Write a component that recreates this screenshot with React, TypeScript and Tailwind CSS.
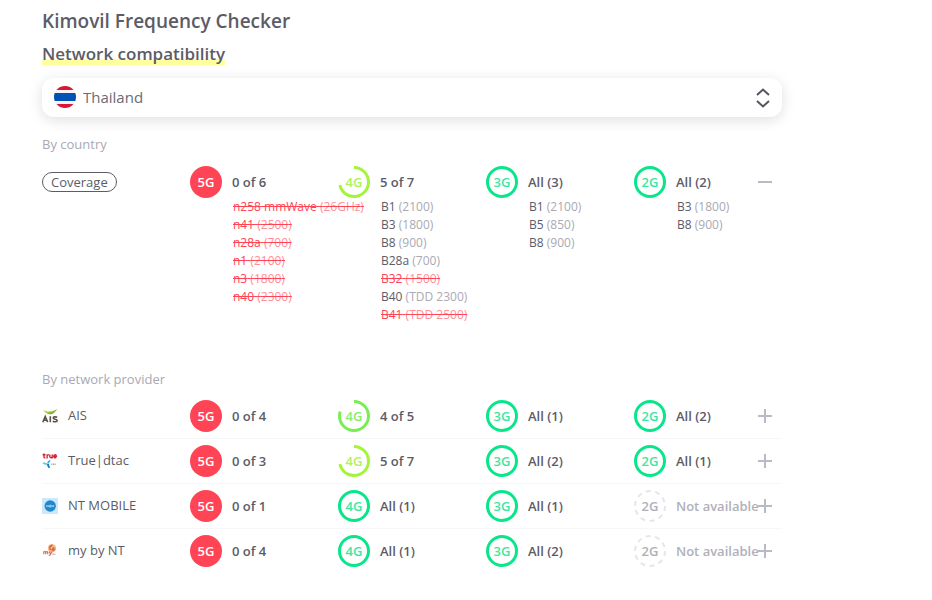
import { useState } from "react";
import clsx from "clsx";

interface Band {
  name: string;
  freq: string;
  missing?: boolean;
}

interface Coverage {
  supported: number;
  total: number;
  bands?: Band[];
}

interface Provider {
  name: string;
  logo: React.ReactNode;
  coverage: Coverage[];
}

const GENERATIONS = ["5G", "4G", "3G", "2G"];

const countryCoverage: Coverage[] = [
  {
    supported: 0,
    total: 6,
    bands: [
      { name: "n258 mmWave", freq: "26GHz", missing: true },
      { name: "n41", freq: "2500", missing: true },
      { name: "n28a", freq: "700", missing: true },
      { name: "n1", freq: "2100", missing: true },
      { name: "n3", freq: "1800", missing: true },
      { name: "n40", freq: "2300", missing: true },
    ],
  },
  {
    supported: 5,
    total: 7,
    bands: [
      { name: "B1", freq: "2100" },
      { name: "B3", freq: "1800" },
      { name: "B8", freq: "900" },
      { name: "B28a", freq: "700" },
      { name: "B32", freq: "1500", missing: true },
      { name: "B40", freq: "TDD 2300" },
      { name: "B41", freq: "TDD 2500", missing: true },
    ],
  },
  {
    supported: 3,
    total: 3,
    bands: [
      { name: "B1", freq: "2100" },
      { name: "B5", freq: "850" },
      { name: "B8", freq: "900" },
    ],
  },
  {
    supported: 2,
    total: 2,
    bands: [
      { name: "B3", freq: "1800" },
      { name: "B8", freq: "900" },
    ],
  },
];

function AisLogo() {
  return (
    <svg className="size-4 shrink-0" viewBox="0 0 16 16" aria-hidden="true">
      <path d="M1 1.5C3 3 5 3.6 7 3.6C10 3.4 12.5 2.6 15 1C13.5 4 11 6.3 8.2 6.3C5 6.3 2.8 4.3 1 1.5Z" fill="#b5d334" />
      <path d="M5.5 4.5C9 5 12 3.5 15 1C13.5 4 11 6.3 8.2 6.3C7 6.3 6 5.6 5.5 4.5Z" fill="#7cb342" />
      <path
        d="M0.8 14.2L3.2 8.6L5.7 14.2M1.7 12.3H4.8M8.3 8.2V14.2M15.2 9.3C13.5 8.6 11.2 8.7 11.2 10C11.2 11.6 15.2 10.9 15.2 12.6C15.2 14.1 12.5 14 10.7 13.2"
        fill="none"
        stroke="#5b524c"
        strokeWidth="1.6"
      />
    </svg>
  );
}

function TrueDtacLogo() {
  return (
    <svg className="size-4 shrink-0" viewBox="0 0 16 16" aria-hidden="true">
      <path
        d="M2 0.5V4Q2 5 3.4 4.8M0.6 1.8H3.6M5.1 5.4V1.6M5 2.8Q5.5 1.7 6.8 1.8M7.8 1.6V3.8Q8.3 5 9.9 4.6M10.2 1.6V5.4M11.7 3.4H14.4Q14.2 1.7 13 1.8Q11.7 1.9 11.7 3.4Q11.8 5 14.4 4.6"
        fill="none"
        stroke="#d0263c"
        strokeWidth="1.4"
      />
      <path d="M8 7Q5.8 7.6 5.2 9.8L5.8 10.8L8.600 8Z" fill="#2ca9df" />
      <path d="M0.6 9.6Q3 9.2 5.4 10.4L5.2 12Q2.4 11.800 0.6 10.6Z" fill="#63c5ea" />
      <path d="M5 11.2L6.8 10.600Q7 12.800 8.200 14.600L6.8 15.300Q5 13.600 5 11.2Z" fill="#1777b5" />
      <path d="M9.3 11.2H14.2" stroke="#a7b0b8" strokeWidth="1.6" strokeDasharray="1.2 0.4" />
    </svg>
  );
}

function NtMobileLogo() {
  return (
    <svg className="size-4 shrink-0" viewBox="0 0 16 16" aria-hidden="true">
      <rect width="16" height="16" fill="#cbe9fd" />
      <circle cx="8.2" cy="8" r="5.7" fill="#2288cb" />
      <path d="M4.8 9V7.3L6.3 9V7.3M7.5 7.3H9V9H7.5ZM10 9V7.3L11.5 9V7.3" fill="none" stroke="#a8d8f4" strokeWidth="0.9" />
    </svg>
  );
}

function MyByNtLogo() {
  return (
    <svg className="size-4 shrink-0" viewBox="0 0 16 16" aria-hidden="true">
      <circle cx="10" cy="5.2" r="4" fill="#f3b67c" />
      <path d="M7 3.6Q8.6 1 11 1.8L9.6 4L11.8 4.2L13.4 6.6L11 8.6L9.4 6.8L7.600 7.2Z" fill="#dc6a48" />
      <path d="M8.6 3.8L10.8 4.8L9.3 6.3Z" fill="#fbe3a0" />
      <path
        d="M1.8 11.3V8.4M1.800 9Q3.200 7.8 3.700 9.3V11.3M3.700 9.3Q5.200 7.8 5.7 9.3V11.3M7.200 8.6L8.5 11M9.900 8.6L8.400 11.4Q7.800 12.600 6.8 12.400"
        fill="none"
        stroke="#d9705a"
        strokeWidth="1.2"
      />
      <path d="M10 11.2H13.500" stroke="#d3b5ad" strokeWidth="1.2" />
    </svg>
  );
}

const providers: Provider[] = [
  {
    name: "AIS",
    logo: <AisLogo />,
    coverage: [
      { supported: 0, total: 4 },
      { supported: 4, total: 5 },
      { supported: 1, total: 1 },
      { supported: 2, total: 2 },
    ],
  },
  {
    name: "True|dtac",
    logo: <TrueDtacLogo />,
    coverage: [
      { supported: 0, total: 3 },
      { supported: 5, total: 7 },
      { supported: 2, total: 2 },
      { supported: 1, total: 1 },
    ],
  },
  {
    name: "NT MOBILE",
    logo: <NtMobileLogo />,
    coverage: [
      { supported: 0, total: 1 },
      { supported: 1, total: 1 },
      { supported: 1, total: 1 },
      { supported: 0, total: 0 },
    ],
  },
  {
    name: "my by NT",
    logo: <MyByNtLogo />,
    coverage: [
      { supported: 0, total: 4 },
      { supported: 1, total: 1 },
      { supported: 2, total: 2 },
      { supported: 0, total: 0 },
    ],
  },
];

// Red disc for no support, grey dashes when the network doesn't exist,
// otherwise a ring filled up to the supported share
function CoverageBadge({ label, supported, total }: { label: string; supported: number; total: number }) {
  const unavailable = total === 0;
  const none = !unavailable && supported === 0;
  const share = unavailable ? 0 : supported / total;
  const ringColor = share === 1 ? "#08e68a" : share > 0.75 ? "#78ee55" : "#a4f43c";

  return (
    <span className="relative flex size-8 shrink-0 items-center justify-center">
      <svg className="absolute inset-0 size-8" viewBox="0 0 32 32" aria-hidden="true">
        {none && <circle cx="16" cy="16" r="16" fill="#ff4455" />}
        {unavailable && (
          <circle cx="16" cy="16" r="15" fill="none" stroke="#e6e6ea" strokeWidth="2" strokeDasharray="5 4.42" />
        )}
        {share > 0 && (
          <circle
            cx="16"
            cy="16"
            r="14.5"
            fill="none"
            stroke={ringColor}
            strokeWidth="3"
            pathLength={100}
            strokeDasharray={share === 1 ? undefined : `${share * 100} 100`}
            transform="rotate(-90 16 16)"
          />
        )}
      </svg>
      <span
        className={clsx(
          "relative text-[13px] leading-4 font-semibold",
          none && "text-white",
          unavailable && "text-[#b0b0ba]",
          share === 1 && "text-[#3ee6a0]",
          share > 0.75 && share < 1 && "text-[#8aec6e]",
          share > 0 && share <= 0.75 && "text-[#aff25a]"
        )}
      >
        {label}
      </span>
    </span>
  );
}

function CoverageCell({ label, coverage, open }: { label: string; coverage: Coverage; open?: boolean }) {
  const { supported, total, bands } = coverage;

  let text = `${supported} of ${total}`;
  if (total === 0) {
    text = "Not available";
  } else if (supported === total) {
    text = `All (${total})`;
  }

  return (
    <>
      <div className="flex items-center gap-[10px]">
        <CoverageBadge label={label} supported={supported} total={total} />
        <span
          className={clsx(
            "whitespace-nowrap text-[13px] leading-5 font-semibold",
            total === 0 ? "text-[#b0b0ba]" : "text-[#5c5c66]"
          )}
        >
          {text}
        </span>
      </div>
      {open && bands && (
        <ul className="pl-[43px] text-[12px] leading-[18px] whitespace-nowrap">
          {bands.map((band) => (
            <li key={band.name}>
              {band.missing ? (
                <s className="text-[#ff4455]">
                  {band.name} <span className="text-[#ff8f99]">({band.freq})</span>
                </s>
              ) : (
                <span className="text-[#5c5c66]">
                  {band.name} <span className="text-[#a9a9b3]">({band.freq})</span>
                </span>
              )}
            </li>
          ))}
        </ul>
      )}
    </>
  );
}

function ToggleButton({ name, open, onClick }: { name: string; open: boolean; onClick: () => void }) {
  return (
    <button
      type="button"
      aria-label={`${open ? "Hide" : "Show"} bands of ${name}`}
      aria-expanded={open}
      onClick={onClick}
      className="absolute top-3.5 right-[9px] size-4 cursor-pointer"
    >
      <svg className="size-4" viewBox="0 0 16 16" fill="none" stroke="#b9bac6" strokeWidth="2" aria-hidden="true">
        <path d="M1 8H15" />
        {!open && <path d="M8 1V15" />}
      </svg>
    </button>
  );
}

export default function App() {
  const [country, setCountry] = useState("Thailand");
  const [countryOpen, setCountryOpen] = useState(true);
  const [openProvider, setOpenProvider] = useState<string | null>(null);

  return (
    <main className="w-full max-w-[824px] bg-white px-[42px] pt-[7px] pb-6 font-['Open_Sans','Noto_Sans',sans-serif] text-[#5c5c66]">
      <h1 className="text-[19px] leading-7 font-semibold">Kimovil Frequency Checker</h1>
      <h2 className="mt-[5px] text-[17px] leading-7 font-semibold">
        <span className="bg-linear-to-t from-[#ffff9b] from-25% to-transparent to-25%">Network compatibility</span>
      </h2>

      <div className="relative mt-[10px] rounded-xl bg-white shadow-[0_3px_14px_rgba(0,0,0,0.13)]">
        <svg className="pointer-events-none absolute top-2 left-3 size-[22px]" viewBox="0 0 22 22" aria-hidden="true">
          <clipPath id="flag">
            <circle cx="11" cy="11" r="11" />
          </clipPath>
          <g clipPath="url(#flag)">
            <rect width="22" height="22" fill="#f3f3f5" />
            <rect width="22" height="4" fill="#d9153a" />
            <rect y="7" width="22" height="8" fill="#0052b4" />
            <rect y="18" width="22" height="4" fill="#d9153a" />
          </g>
        </svg>
        <select
          aria-label="Country"
          value={country}
          onChange={(e) => setCountry(e.target.value)}
          className="block h-[39px] w-full cursor-pointer appearance-none rounded-xl bg-transparent pr-10 pl-[41px] text-[15px] text-[#6b6b75]"
        >
          <option>Thailand</option>
        </select>
        <svg
          className="pointer-events-none absolute top-2.5 right-3 h-5 w-3.5"
          viewBox="0 0 14 20"
          fill="none"
          stroke="#55555f"
          strokeWidth="2"
          aria-hidden="true"
        >
          <path d="M1 7L7 1.5L13 7M1 13L7 18.5L13 13" />
        </svg>
      </div>

      <table className="mt-[17px] w-full table-fixed border-separate border-spacing-0 text-left">
        <caption className="pb-1.5 text-left text-[13px] leading-5 text-[#a9a9b3]">By country</caption>
        <tbody>
          <tr>
            <th scope="row" className="px-0 py-1.5 align-top font-normal">
              <span className="flex h-8 items-center text-[13px]">
                <span className="rounded-full border border-[#5c5c66] px-2 leading-[18px]">Coverage</span>
              </span>
            </th>
            {countryCoverage.map((coverage, i) => (
              <td key={GENERATIONS[i]} className="relative px-0 py-1.5 align-top">
                <CoverageCell label={GENERATIONS[i]} coverage={coverage} open={countryOpen} />
                {i === countryCoverage.length - 1 && (
                  <ToggleButton name={country} open={countryOpen} onClick={() => setCountryOpen(!countryOpen)} />
                )}
              </td>
            ))}
          </tr>
        </tbody>
      </table>

      <table className="mt-[39px] w-full table-fixed border-separate border-spacing-0 text-left">
        <caption className="pb-[5px] text-left text-[13px] leading-5 text-[#a9a9b3]">By network provider</caption>
        <tbody className="[&>tr:not(:last-child)>*]:border-b [&>tr>*]:border-[#f7f7f9]">
          {providers.map((provider) => {
            const open = openProvider === provider.name;
            return (
              <tr key={provider.name}>
                <th scope="row" className="px-0 py-1.5 align-top font-normal">
                  <span className="flex h-8 items-center gap-[10px] text-[13px]">
                    {provider.logo}
                    {provider.name}
                  </span>
                </th>
                {provider.coverage.map((coverage, i) => (
                  <td key={GENERATIONS[i]} className="relative px-0 py-1.5 align-top">
                    <CoverageCell label={GENERATIONS[i]} coverage={coverage} open={open} />
                    {i === provider.coverage.length - 1 && (
                      <ToggleButton
                        name={provider.name}
                        open={open}
                        onClick={() => setOpenProvider(open ? null : provider.name)}
                      />
                    )}
                  </td>
                ))}
              </tr>
            );
          })}
        </tbody>
      </table>
    </main>
  );
}
